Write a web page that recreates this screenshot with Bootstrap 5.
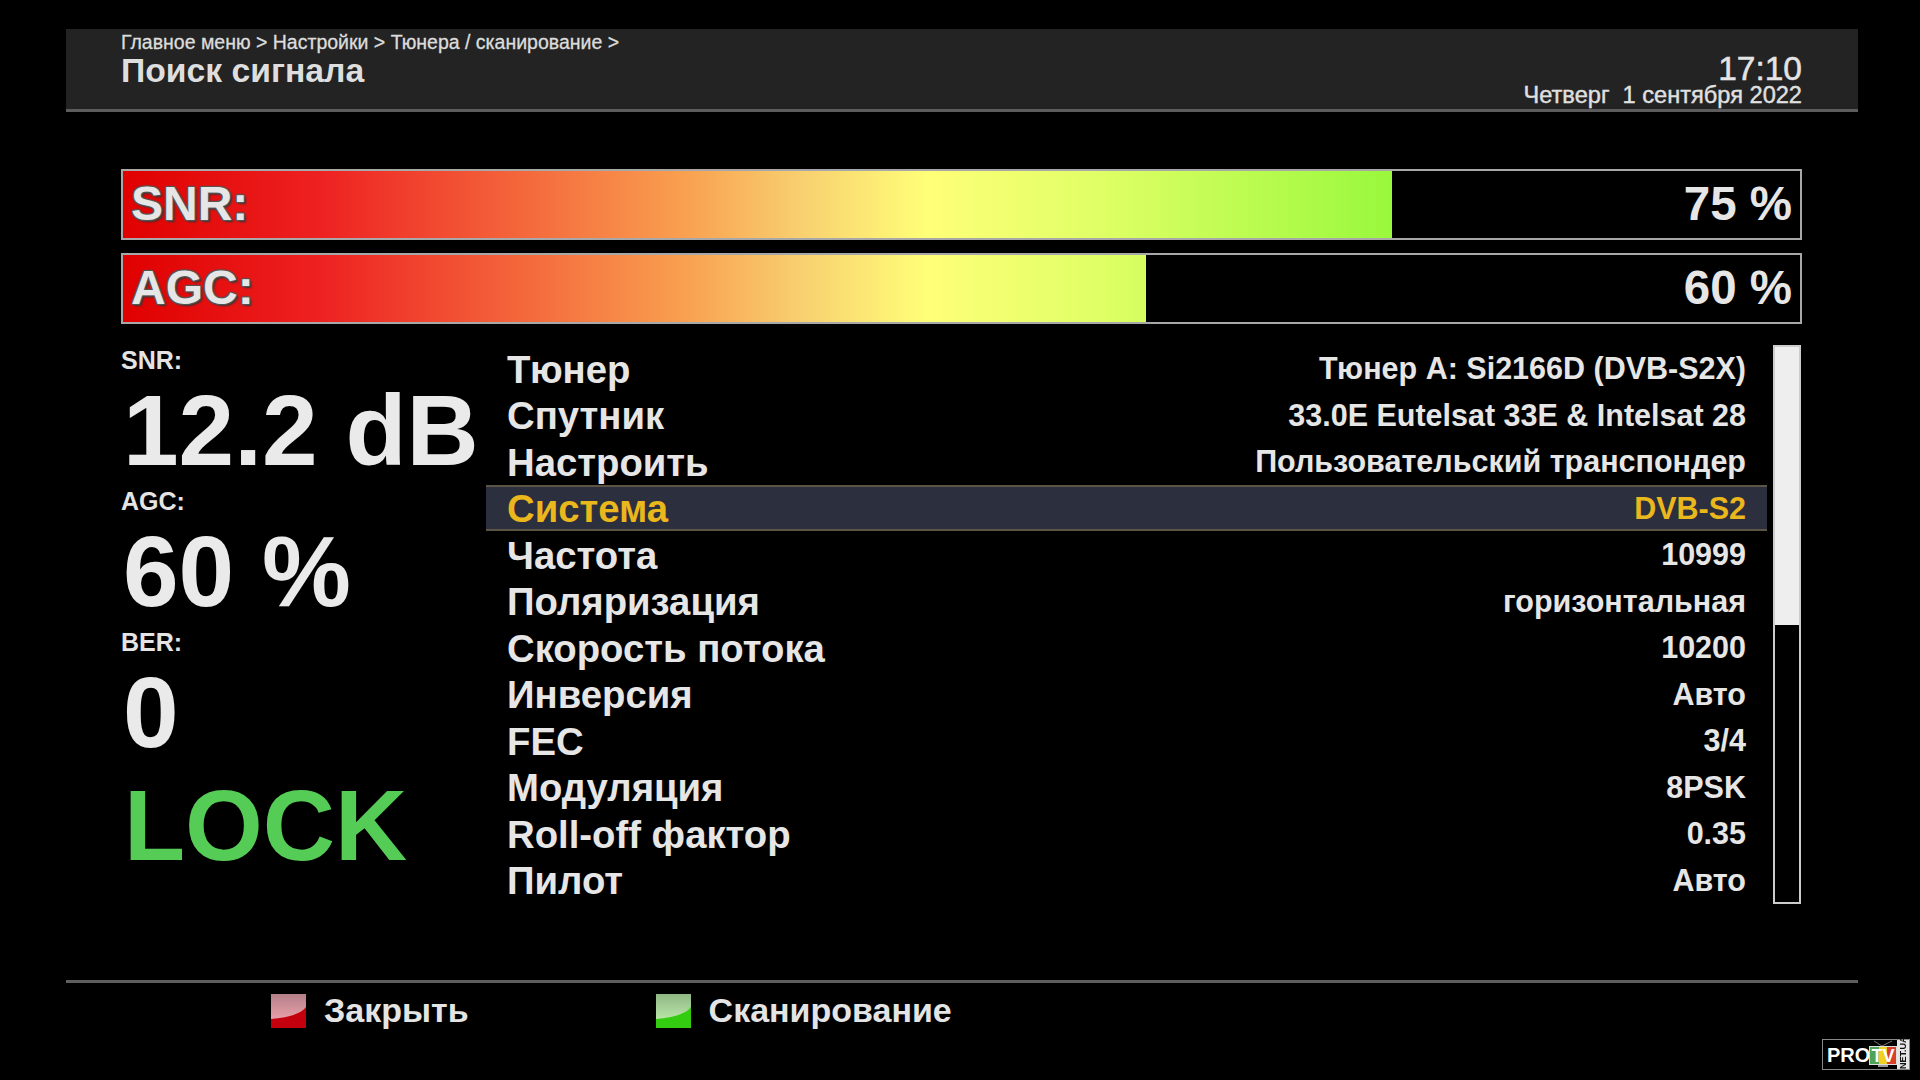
<!DOCTYPE html>
<html lang="ru">
<head>
  <meta charset="UTF-8">
  <title>Поиск сигнала</title>
  <link href="https://cdn.jsdelivr.net/npm/bootstrap@5.3.0/dist/css/bootstrap.min.css" rel="stylesheet" />
  <style>
    body {
      background-color: #000;
      color: #e8e8e8;
      font-family: "Liberation Sans", Arial, sans-serif;
      margin: 0;
      width: 1920px;
      height: 1080px;
      overflow: hidden;
    }
    .osd {
      width: 1792px;
      margin-left: 66px;
      padding-top: 29px;
    }
    .top-head {
      height: 83px;
      background-color: #232323;
      border-bottom: 3px solid #5c5c5c;
      padding: 2px 56px 0 55px;
    }
    .crumbs {
      font-size: 19.5px;
      line-height: 22px;
      color: #dcdcdc;
      -webkit-text-stroke: .3px #dcdcdc;
    }
    .head-title {
      font-size: 33.7px;
      line-height: 34px;
      font-weight: 700;
      color: #dedede;
    }
    .clock-time {
      font-size: 33.5px;
      line-height: 34px;
      margin-top: 21px;
      color: #e4e4e4;
      -webkit-text-stroke: .5px #e4e4e4;
    }
    .clock-date {
      font-size: 23.6px;
      line-height: 19px;
      color: #e0e0e0;
      white-space: pre;
      -webkit-text-stroke: .4px #e0e0e0;
    }
    .main-area {
      padding: 57px 56px 0 55px;
    }
    .sig-bar {
      height: 71px;
      border: 2px solid #a8a8a8;
      margin-bottom: 13px;
      background-color: #000;
      position: relative;
    }
    .sig-fill {
      height: 100%;
      background-image: linear-gradient(90deg, #e00000 0, #ee2222 12%, #f9a050 33.5%, #f8d070 40.5%, #ffff78 48%, #e0ff66 58%, #99f83c 75.7%);
      background-size: 1677px 100%;
      background-repeat: no-repeat;
    }
    .sig-name, .sig-value {
      position: absolute;
      top: 0;
      bottom: 2px;
      display: flex;
      align-items: center;
      font-size: 47.5px;
      font-weight: 700;
      color: #e6e6e6;
    }
    .sig-name {
      left: 8px;
      font-size: 48px;
      text-shadow: -1px -1px 1px #555, 1px -1px 1px #555, -1px 1px 1px #555, 1px 1px 1px #555, 2px 2px 2px #333;
    }
    .sig-value { right: 8px; }
    .info-area {
      margin-top: 21px;
    }
    .left-col {
      width: 365px;
      flex: none;
    }
    .meter-label {
      font-size: 25px;
      line-height: 30px;
      font-weight: 700;
      color: #e4e4e4;
    }
    .meter-value {
      font-size: 100px;
      line-height: 111px;
      font-weight: 700;
      color: #eaeaea;
      white-space: nowrap;
      padding-left: 2px;
    }
    .lock-text {
      font-size: 100px;
      line-height: 114px;
      font-weight: 700;
      color: #55cc55;
      padding-left: 3px;
    }
    .param-list {
      width: 1281px;
      flex: none;
    }
    .param-row {
      height: 46.5px;
      padding: 2px 21px 0;
      color: #e6e6e6;
    }
    .param-name {
      font-size: 38.3px;
      font-weight: 700;
    }
    .param-val {
      font-size: 30.5px;
      font-weight: 700;
    }
    .param-row.is-active {
      background-color: #2c2f3d;
      border-top: 2px solid #5c5544;
      border-bottom: 2px solid #5c5544;
      color: #eab71c;
    }
    .scroll-track {
      width: 28px;
      height: 559px;
      margin-left: 6px;
      border: 2px solid #ccc;
    }
    .scroll-thumb {
      height: 278px;
      background-color: #eee;
    }
    .foot-line {
      margin-top: 76px;
      border-top: 3px solid #5e5e5e;
      padding-left: 205px;
      height: 58px;
    }
    .foot-item {
      font-size: 34px;
      font-weight: 700;
      color: #e4e4e4;
      gap: 18px;
    }
    .foot-gap { margin-left: 187px; }
    .foot-key { display: block; filter: blur(.6px); }
    .logo-mark {
      position: absolute;
      left: 1822px;
      top: 1039px;
      width: 88px;
      height: 31px;
      border: 1px solid #888;
      background-color: #000;
    }
    .logo-pro {
      font-size: 20px;
      font-weight: 700;
      color: #fff;
      line-height: 1;
      padding-left: 4px;
    }
    .logo-site {
      position: absolute;
      right: 0;
      top: 0;
      bottom: 0;
      width: 12px;
      background-color: #e6e6e6;
      color: #111;
      font-size: 9px;
      font-weight: 700;
      writing-mode: vertical-rl;
      transform: rotate(180deg);
      text-align: center;
      line-height: 12px;
    }
    .logo-tv {
      position: absolute;
      left: 45px;
      top: 0;
    }
  </style>
</head>
<body>
<div class="osd">
  <div class="top-head d-flex justify-content-between">
    <div>
      <div class="crumbs">Главное меню &gt; Настройки &gt; Тюнера / сканирование &gt;</div>
      <div class="head-title">Поиск сигнала</div>
    </div>
    <div class="text-end">
      <div class="clock-time">17:10</div>
      <div class="clock-date">Четверг  1 сентября 2022</div>
    </div>
  </div>

  <div class="main-area">
    <div class="sig-bar">
      <div class="sig-fill" style="width: 75.7%"></div>
      <div class="sig-name">SNR:</div>
      <div class="sig-value">75 %</div>
    </div>
    <div class="sig-bar">
      <div class="sig-fill" style="width: 61%"></div>
      <div class="sig-name">AGC:</div>
      <div class="sig-value">60 %</div>
    </div>

    <div class="info-area d-flex align-items-start">
      <div class="left-col">
        <div class="meter-label">SNR:</div>
        <div class="meter-value">12.2 dB</div>
        <div class="meter-label">AGC:</div>
        <div class="meter-value">60 %</div>
        <div class="meter-label">BER:</div>
        <div class="meter-value">0</div>
        <div class="lock-text">LOCK</div>
      </div>
      <div class="param-list" id="param-list"></div>
      <div class="scroll-track"><div class="scroll-thumb"></div></div>
    </div>
  </div>

  <div class="foot-line d-flex align-items-center">
    <div class="foot-item d-flex align-items-center">
      <svg class="foot-key" width="35" height="34" viewBox="0 0 35 34">
        <defs>
          <linearGradient id="red-gloss" x1="0" y1="0" x2="0" y2="1"><stop offset="0" stop-color="#b47f88"/><stop offset="1" stop-color="#e8a0aa"/></linearGradient>
          <linearGradient id="green-gloss" x1="0" y1="0" x2="0" y2="1"><stop offset="0" stop-color="#8fb884"/><stop offset="1" stop-color="#b8e4a8"/></linearGradient>
        </defs>
        <rect width="35" height="34" fill="#c4000f"/>
        <path d="M0 0H35V13C30 20 16 24 0 25Z" fill="url(#red-gloss)"/>
      </svg>
      <span>Закрыть</span>
    </div>
    <div class="foot-item foot-gap d-flex align-items-center">
      <svg class="foot-key" width="35" height="34" viewBox="0 0 35 34">
        <rect width="35" height="34" fill="#33cc11"/>
        <path d="M0 0H35V13C30 20 16 24 0 25Z" fill="url(#green-gloss)"/>
      </svg>
      <span>Сканирование</span>
    </div>
  </div>
</div>

<div class="logo-mark d-flex align-items-center">
  <span class="logo-pro">PRO</span>
  <svg class="logo-tv" width="30" height="29" viewBox="0 0 30 29">
    <path d="M6 1L14 6L24 1" fill="none" stroke="#777" stroke-width="1"/>
    <rect x="1" y="6" width="28" height="19" fill="#ddd"/>
    <rect x="2" y="7" width="9" height="17" fill="#4da35a"/>
    <rect x="11" y="7" width="8" height="17" fill="#f0d020"/>
    <rect x="19" y="7" width="9" height="17" fill="#d8402a"/>
    <rect x="10" y="25" width="10" height="2" fill="#999"/>
    <text x="15" y="22" text-anchor="middle" font-family="Liberation Sans" font-weight="700" font-size="18" fill="#fff">TV</text>
  </svg>
  <div class="logo-site">NET.UA</div>
</div>

<script src="https://cdn.jsdelivr.net/npm/bootstrap@5.3.0/dist/js/bootstrap.bundle.min.js"></script>
<script>
  const params = [
    ["Тюнер", "Тюнер А: Si2166D (DVB-S2X)"],
    ["Спутник", "33.0E Eutelsat 33E & Intelsat 28"],
    ["Настроить", "Пользовательский транспондер"],
    ["Система", "DVB-S2", true],
    ["Частота", "10999"],
    ["Поляризация", "горизонтальная"],
    ["Скорость потока", "10200"],
    ["Инверсия", "Авто"],
    ["FEC", "3/4"],
    ["Модуляция", "8PSK"],
    ["Roll-off фактор", "0.35"],
    ["Пилот", "Авто"]
  ];
  const list = document.getElementById("param-list");
  params.forEach(p => {
    const row = document.createElement("div");
    row.className = "param-row d-flex justify-content-between align-items-center" + (p[2] ? " is-active" : "");
    const name = document.createElement("span");
    name.className = "param-name";
    name.textContent = p[0];
    const val = document.createElement("span");
    val.className = "param-val";
    val.textContent = p[1];
    row.append(name, val);
    list.appendChild(row);
  });
</script>
</body>
</html>
